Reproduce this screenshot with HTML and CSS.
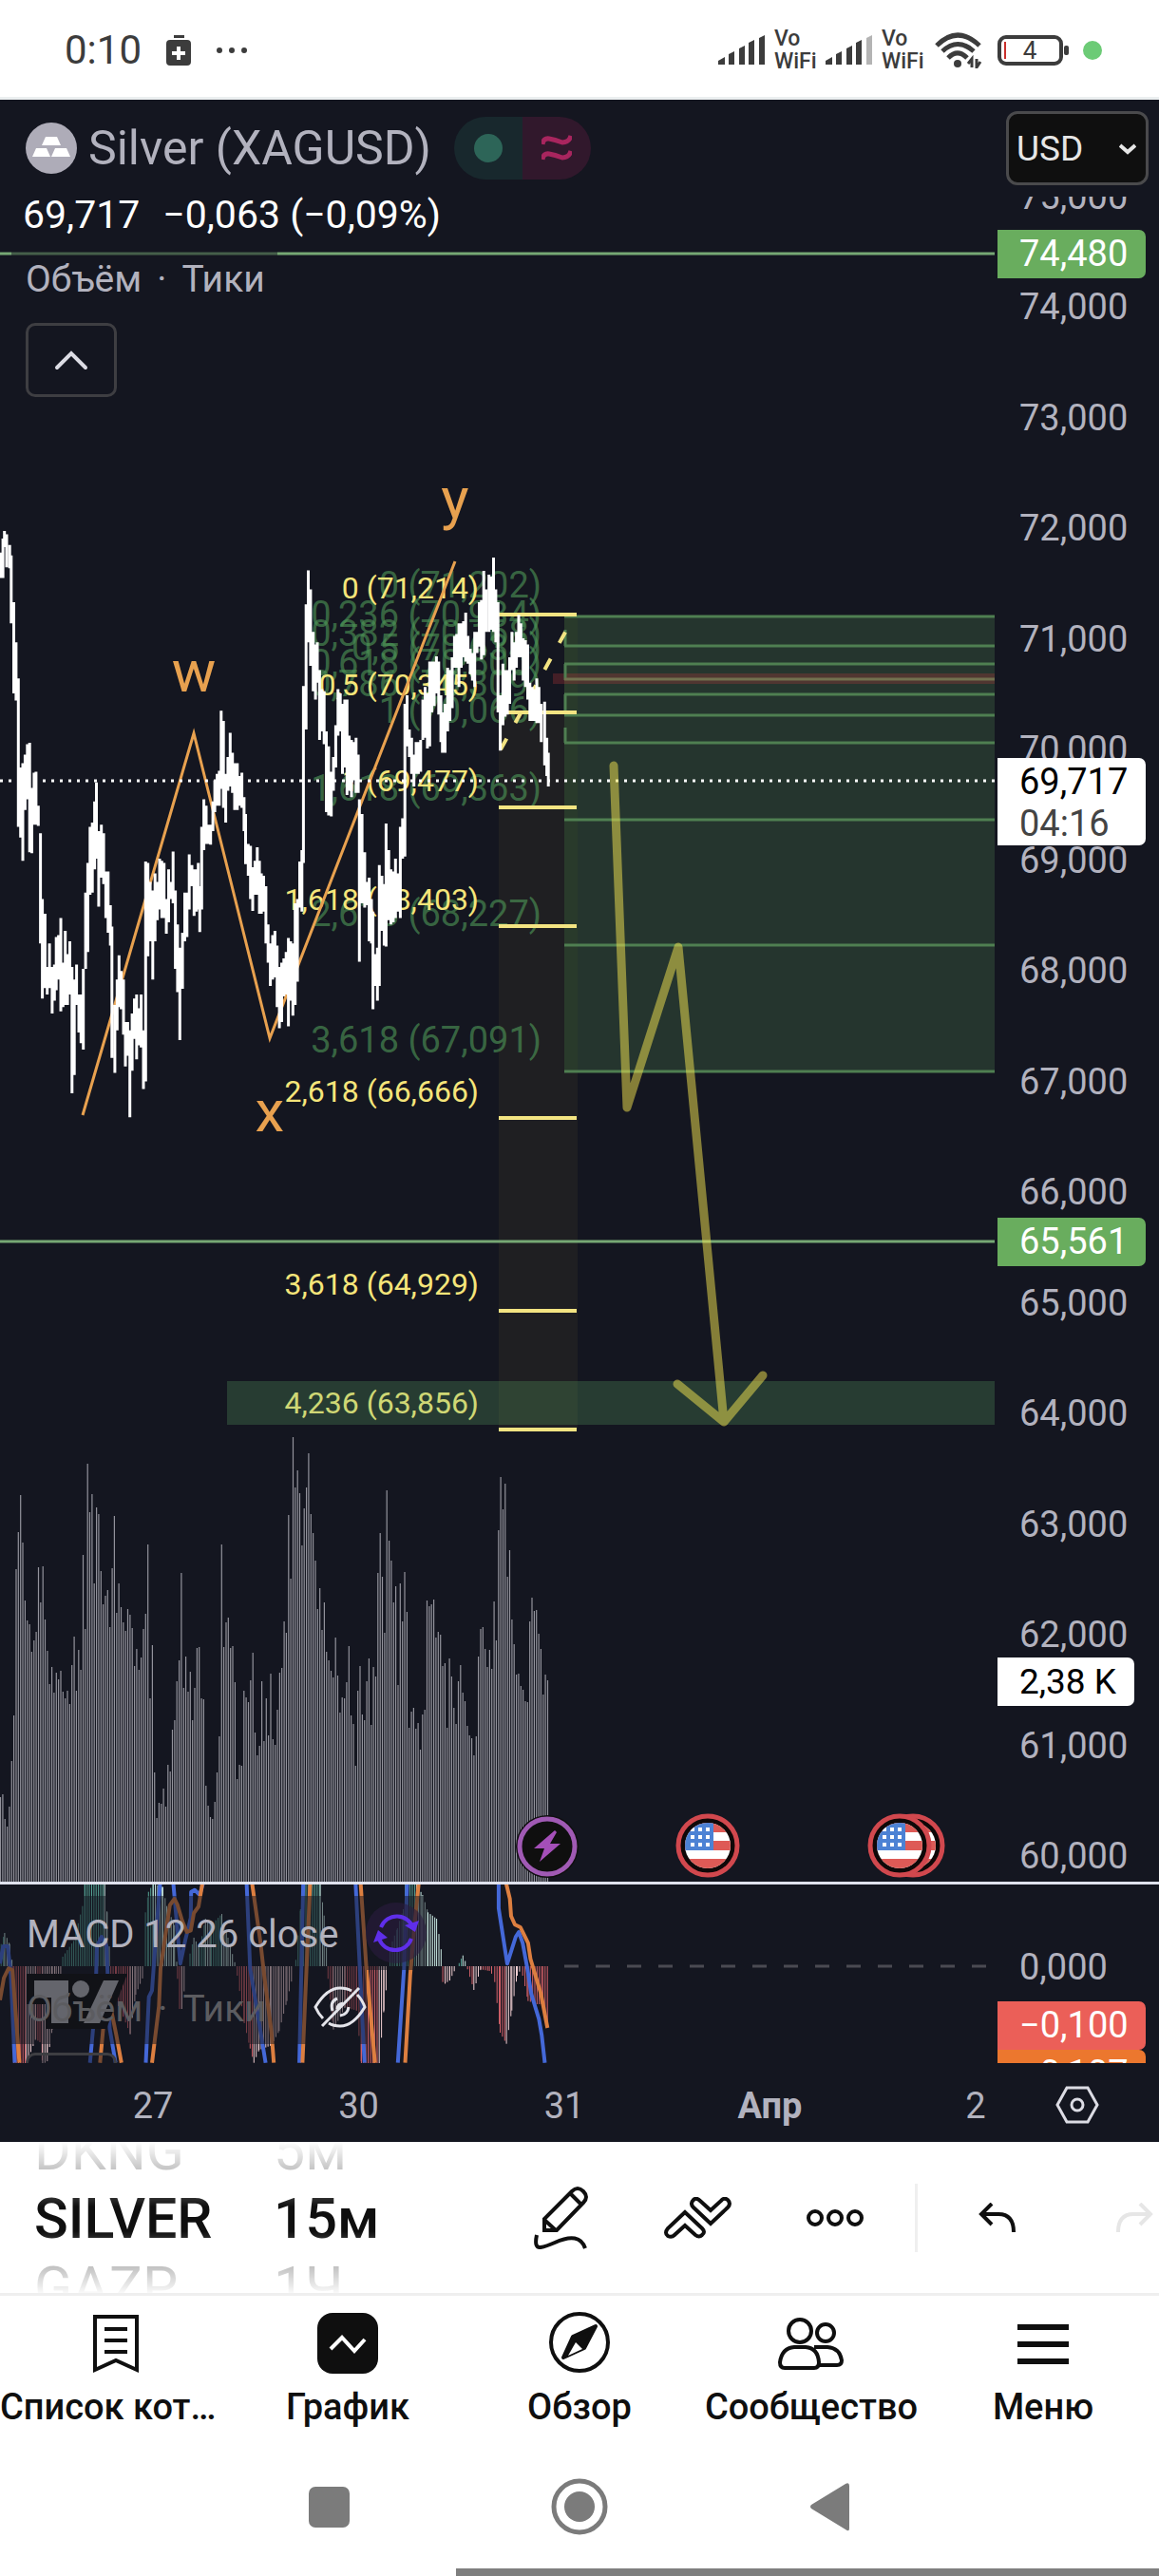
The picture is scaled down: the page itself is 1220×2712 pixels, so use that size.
FILE: index.html
```html
<!DOCTYPE html>
<html lang="ru">

<head>
    <meta charset="UTF-8">
    <meta name="viewport" content="width=device-width, initial-scale=1.0">
    <title>Silver (XAGUSD)</title>
    <link rel="stylesheet" href="styles.css">
</head>

<body>

    <!-- =========== Status bar =========== -->
    <header class="statusbar">
        <span class="clock">0:10</span>
        <svg class="saver" width="26" height="32" viewBox="0 0 26 32">
            <path d="M8 0h11v3H8zM4 5h18q4 0 4 4v19q0 4-4 4H4q-4 0-4-4V9q0-4 4-4zM11 12v5H6v4h5v5h4v-5h5v-4h-5v-5z" fill="#3c3c3c" fill-rule="evenodd"/>
        </svg>
        <svg width="34" height="8" viewBox="0 0 34 8" fill="#3c3c3c">
            <circle cx="4" cy="4" r="3"/><circle cx="17" cy="4" r="3"/><circle cx="30" cy="4" r="3"/>
        </svg>
        <div class="status-right">
            <svg width="49" height="32" viewBox="0 0 49 32" fill="#3c3c3c">
                <path d="M0 31v-4l7-4v8zM11 31V20l6-3v14zM22 31V14l6-3v20zM32 31V8l6-3v26zM43 31V3l6-3v31z"/>
            </svg>
            <span class="vowifi">Vo<br>WiFi</span>
            <svg width="49" height="32" viewBox="0 0 49 32" fill="#3c3c3c">
                <path d="M0 31v-4l7-4v8zM11 31V20l6-3v14zM22 31V14l6-3v20zM32 31V8l6-3v26z"/>
                <path d="M43 31V3l6-3v31z" fill="#b4b4b4"/>
            </svg>
            <span class="vowifi">Vo<br>WiFi</span>
            <svg class="wifi" width="50" height="38" viewBox="0 0 50 38" fill="none" stroke="#3c3c3c" stroke-width="5">
                <path d="M2 14Q24-8 47 14M8 20Q24 5 41 20M14 27Q24 17 34 27"/>
                <circle cx="24" cy="33" r="4" fill="#3c3c3c" stroke="none"/>
                <path d="M39 37V28l-4 5M44 28v9l4-6" stroke-width="3"/>
            </svg>
            <svg class="battery" width="76" height="32" viewBox="0 0 76 32">
                <rect x="2" y="2" width="65" height="28" rx="7" fill="none" stroke="#3c3c3c" stroke-width="4"/>
                <rect x="70" y="11" width="5" height="10" rx="2" fill="#3c3c3c"/>
                <path d="M8 7v18" stroke="#c9302c" stroke-width="2"/>
                <text x="34" y="25">4</text>
            </svg>
            <i class="privacy"></i>
        </div>
    </header>

    <!-- =========== Chart =========== -->
    <main class="chart">
        <section class="pane">
            <svg class="plot" viewBox="0 105 1047 1876">
                <!-- fib bands -->
                <rect x="525" y="750" width="83" height="755" fill="#1f1f22"/>
                <rect x="594" y="649" width="453" height="479" fill="#25352e"/>
                <rect x="594" y="649" width="14" height="479" fill="#293a2b"/>
                <rect x="582" y="709" width="465" height="11" fill="#c23a3a" opacity=".28"/>
                <path class="fib-green" d="M594 649h453M594 680h453M594 699h453M594 731h453M594 753h453M594 782h453M594 863h453M594 995h453M594 1128h453M595 663v17M595 699v17M595 731v18M595 766v16"/>
                <path d="M594 715h453" stroke="#71714f" stroke-width="3"/>
                <g class="fib-green-label">
                    <text x="570" y="629">0 (71,202)</text>
                    <text x="570" y="660">0,236 (70,934)</text>
                    <text x="570" y="680">0,382 (70,768)</text>
                    <text x="570" y="695">0,5 (70,634)</text>
                    <text x="570" y="711">0,618 (70,500)</text>
                    <text x="570" y="733">0,786 (70,309)</text>
                    <text x="570" y="761">1 (70,066)</text>
                    <text x="570" y="843">1,618 (69,363)</text>
                    <text x="570" y="975">2,618 (68,227)</text>
                    <text x="570" y="1108">3,618 (67,091)</text>
                </g>
                <path class="fib-yellow" d="M525 647h82M525 750h82M525 850h82M525 975h82M525 1177h82M525 1380h82M525 1505h82"/>
                <path class="fib-yellow" d="M527 789L597 662" stroke-dasharray="13 19"/>
                <g class="fib-yellow-label">
                    <text x="504" y="630">0 (71,214)</text>
                    <text x="504" y="732">0,5 (70,345)</text>
                    <text x="504" y="833">1 (69,477)</text>
                    <text x="504" y="958">1,618 (68,403)</text>
                    <text x="504" y="1160">2,618 (66,666)</text>
                    <text x="504" y="1363">3,618 (64,929)</text>
                    <text x="504" y="1488">4,236 (63,856)</text>
                </g>

                <!-- levels and demand zone -->
                <path d="M0 267h1047M0 1307h1047" stroke="#76a874" stroke-width="3"/>
                <rect x="239" y="1454" width="808" height="46" fill="#5fae66" opacity=".25"/>

                <path id="volume" stroke="#93939c" stroke-width="1.2"/>
                <path class="wave" d="M87 1174L204 772L284 1093L479 591"/>
                <path id="candles" fill="#fff"/>
                <path d="M0 822h1047" stroke="#fff" stroke-width="3" stroke-dasharray="3 6"/>

                <g class="wave-label">
                    <text x="204" y="728">w</text>
                    <text x="284" y="1191">x</text>
                    <text x="479" y="546">y</text>
                </g>

                <path class="arrow" d="M646 806L660 1166L714 997L762 1497M713 1457L762 1497L803 1448"/>

                <!-- events on the time line -->
                <g transform="translate(576 1944)">
                    <circle r="33" fill="#0f0f0f"/>
                    <circle r="29" fill="#0f0f0f" stroke="#a05ab4" stroke-width="5"/>
                    <path d="M8-17L-14 2H-3L-8 16L14-3H3L10-15z" fill="#a44fb8"/>
                </g>
                <defs>
                    <clipPath id="round"><circle r="24"/></clipPath>
                    <g id="flag">
                        <circle r="31" fill="#0f0808" stroke="#d1484e" stroke-width="5"/>
                        <g clip-path="url(#round)">
                            <path d="M-24-24h48v48h-48z" fill="#fff"/>
                            <path d="M-24-24h48v10h-48zM-24-5h48v10h-48zM-24 14h48v10h-48z" fill="#de5a56"/>
                            <path d="M-24-24h30v29h-30z" fill="#4c82d4"/>
                            <path d="M-18-17h4M-10-17h4M-2-17h4M-18-9h4M-10-9h4M-2-9h4M-18-1h4M-10-1h4M-2-1h4" stroke="#fff" stroke-width="4"/>
                        </g>
                    </g>
                </defs>
                <use href="#flag" x="745" y="1943"/>
                <use href="#flag" x="961" y="1943"/>
                <use href="#flag" x="947" y="1943"/>
            </svg>

            <div class="legend">
                <div class="symbol">
                    <svg width="54" height="54" viewBox="0 0 54 54">
                        <circle cx="27" cy="27" r="27" fill="#aeacb8"/>
                        <path d="M21 15h12l4 9H17zM11 27h11l4 9H7zM31 27h12l4 9H27z" fill="#fff"/>
                    </svg>
                    <h1>Silver (XAGUSD)</h1>
                    <span class="pills">
                        <span class="open"><i></i></span>
                        <span class="approx">
                            <svg width="32" height="28" viewBox="0 0 32 28" fill="none" stroke="#a8255e" stroke-width="5">
                                <path d="M1 10Q2 3 8 4T22 8Q29 8 31 1M1 26Q2 19 8 20T22 24Q29 24 31 17"/>
                            </svg>
                        </span>
                    </span>
                </div>
                <p class="quote"><span>69,717</span><span>−0,063 (−0,09%)</span></p>
                <p class="study">Объём<b>·</b>Тики</p>
                <button class="collapse" aria-label="Свернуть">
                    <svg width="36" height="22" viewBox="0 0 36 22" fill="none" stroke="#dcdce4" stroke-width="4" stroke-linecap="round">
                        <path d="M3 19L18 4L33 19"/>
                    </svg>
                </button>
            </div>
        </section>

        <aside class="price-axis">
            <div class="currency">
                <select aria-label="Валюта">
                    <option>USD</option>
                </select>
                <svg width="18" height="12" viewBox="0 0 18 12" fill="none" stroke="#e6e6e6" stroke-width="4">
                    <path d="M1 2L9 9L17 2"/>
                </svg>
            </div>
            <div class="scale">
                <ul>
                    <li>75,000</li>
                    <li>74,000</li>
                    <li>73,000</li>
                    <li>72,000</li>
                    <li>71,000</li>
                    <li>70,000</li>
                    <li>69,000</li>
                    <li>68,000</li>
                    <li>67,000</li>
                    <li>66,000</li>
                    <li>65,000</li>
                    <li>64,000</li>
                    <li>63,000</li>
                    <li>62,000</li>
                    <li>61,000</li>
                    <li>60,000</li>
                </ul>
                <span class="tag green" style="top: 3.4%">74,480</span>
                <span class="tag last" style="top: 34.7%">69,717<small>04:16</small></span>
                <span class="tag green" style="top: 62%">65,561</span>
                <span class="tag volume" style="top: 88.1%">2,38 K</span>
            </div>
        </aside>

        <!-- =========== MACD =========== -->
        <section class="pane macd">
            <svg class="plot" viewBox="0 0 1047 188">
                <path id="histUp" stroke="#56a596"/>
                <path id="histUpWeak" stroke="#cdeee6"/>
                <path id="histDown" stroke="#d9636b"/>
                <path id="histDownWeak" stroke="#f2d0d3"/>
                <path d="M594 86h453" stroke="#4a4a52" stroke-width="3" stroke-dasharray="15 18"/>
                <path id="macdLine" stroke="#4468d8"/>
                <path id="signalLine" stroke="#dd7f40"/>
            </svg>
            <div class="legend">
                <svg class="logo" width="106" height="58" viewBox="0 0 106 58">
                    <path d="M4 0h102L84 58H20V32H0V0z" fill="#0f0f0f"/>
                    <path d="M8 7h36v45H26V25H8zM97 7H81L60 52h17zM57 7a9 9 0 1 1 0 18a9 9 0 1 1 0-18z" fill="#b4b4b8"/>
                </svg>
                <div class="row wide">
                    <span>MACD 12 26 close</span>
                    <svg width="64" height="64" viewBox="0 0 64 64">
                        <circle cx="32" cy="32" r="32" fill="#2a1d40" opacity=".6"/>
                        <path d="M16 26a18 18 0 0 1 34 1M48 38a18 18 0 0 1-34 0" fill="none" stroke="#5f2eea" stroke-width="4"/>
                        <path d="M41 24l11 7l4-12zM8 42l5-13l10 8z" fill="#5f2eea"/>
                    </svg>
                </div>
                <div class="row">
                    <span class="muted">Объём<b>·</b>Тики</span>
                    <svg width="56" height="44" viewBox="0 0 56 44" fill="none" stroke="#e4e4ea" stroke-width="3">
                        <path d="M10 34Q5 29 2 22Q14 2 28 2Q35 2 40 5M46 9Q51 14 54 22Q42 42 28 42Q21 42 16 39M20 26Q17 16 25 13M28 31Q36 30 37 22M9 42L48 2M25 24q0-5 6-6"/>
                    </svg>
                </div>
                <div class="cut"></div>
            </div>
        </section>

        <aside class="price-axis macd-axis">
            <span class="zero">0,000</span>
            <span class="red">−0,100</span>
            <span class="orange">−0,107</span>
        </aside>

        <!-- =========== Time axis =========== -->
        <ul class="time-axis">
            <li>27</li>
            <li>30</li>
            <li>31</li>
            <li class="month">Апр</li>
            <li>2</li>
        </ul>
        <button class="axis-settings" aria-label="Настройки шкалы">
            <svg width="46" height="40" viewBox="0 0 46 40" fill="none" stroke="#dcdce4" stroke-width="3">
                <path d="M12 2h22l10 18l-10 18H12L2 20z"/><circle cx="23" cy="20" r="6"/>
            </svg>
        </button>
    </main>

    <!-- =========== Toolbar =========== -->
    <div class="toolbar">
        <ul class="picker symbols">
            <li>DKNG</li>
            <li class="current">SILVER</li>
            <li>GAZP</li>
        </ul>
        <ul class="picker intervals">
            <li>5м</li>
            <li class="current">15м</li>
            <li>1Ч</li>
        </ul>
        <div class="tools">
            <button aria-label="Рисование">
                <svg width="58" height="68" viewBox="0 0 58 68" fill="none" stroke="#0f0f0f" stroke-width="4">
                    <path d="M11 47V35L40 6Q46 0 52 6Q58 12 52 18L24 47zM11 36L23 47M38 8L50 20M3 52Q0 66 7 65Q13 64 22 60Q48 48 54 66"/>
                </svg>
            </button>
            <button aria-label="Индикаторы">
                <svg width="72" height="44" viewBox="0 0 72 44" fill="none" stroke="#0f0f0f" stroke-width="4">
                    <path d="M22 16L4 33Q0 38 4 41Q8 43 11 40L22 30L33 40Q37 43 40 40Q44 37 40 33z"/>
                    <path d="M49 28L67 11Q71 7 67 3Q63 0 60 4L49 14L38 4Q34 0 31 3Q27 7 31 11z"/>
                </svg>
            </button>
            <button aria-label="Ещё">
                <svg width="62" height="20" viewBox="0 0 62 20" fill="none" stroke="#0f0f0f" stroke-width="4">
                    <circle cx="10" cy="10" r="7"/><circle cx="31" cy="10" r="7"/><circle cx="52" cy="10" r="7"/>
                </svg>
            </button>
            <i class="split"></i>
            <button aria-label="Отменить">
                <svg width="40" height="32" viewBox="0 0 40 32" fill="none" stroke="#0f0f0f" stroke-width="4">
                    <path d="M14 1L3 12L14 23M3 12H21Q37 12 37 31"/>
                </svg>
            </button>
            <button aria-label="Повторить">
                <svg width="40" height="32" viewBox="0 0 40 32" fill="none" stroke="#e6e6e6" stroke-width="4">
                    <path d="M26 1L37 12L26 23M37 12H19Q3 12 3 31"/>
                </svg>
            </button>
        </div>
    </div>

    <!-- =========== Tabs =========== -->
    <nav class="tabs">
        <a href="#watchlist">
            <svg width="66" height="66" viewBox="0 0 66 66" fill="none" stroke="#0f0f0f" stroke-width="4">
                <path d="M11 5H55V61L33 51L11 61V5z"/><path d="M21 18h24M21 30h24M21 42h24"/>
            </svg>
            <span>Список котировок</span>
        </a>
        <a href="#chart">
            <svg width="66" height="66" viewBox="0 0 66 66">
                <rect x="1" y="1" width="64" height="64" rx="16" fill="#0f0f0f"/>
                <path d="M15 39L27 27L40 41L51 29" fill="none" stroke="#fff" stroke-width="4"/>
            </svg>
            <span>График</span>
        </a>
        <a href="#ideas">
            <svg width="66" height="66" viewBox="0 0 66 66" fill="none" stroke="#0f0f0f" stroke-width="4">
                <circle cx="33" cy="32" r="30"/>
                <path d="M26 26L50 15L38 38L16 48z" fill="#0f0f0f" stroke-linejoin="round"/>
                <path d="M29 32L36 39L21 46z" fill="#fff" stroke="none"/>
            </svg>
            <span>Обзор</span>
        </a>
        <a href="#community">
            <svg width="70" height="66" viewBox="0 0 70 66" fill="none" stroke="#0f0f0f" stroke-width="4">
                <ellipse cx="23" cy="20" rx="12" ry="12"/><ellipse cx="50" cy="22" rx="9" ry="9"/>
                <path d="M17 37H29Q42 38 43 53Q43 59 38 59H7Q2 59 2 53Q4 38 17 37zM38 37H52Q65 38 67 51Q67 56 62 56H43"/>
            </svg>
            <span>Сообщество</span>
        </a>
        <a href="#menu">
            <svg width="66" height="66" viewBox="0 0 66 66" fill="none" stroke="#0f0f0f" stroke-width="6">
                <path d="M6 16h54M6 34h54M6 52h54"/>
            </svg>
            <span>Меню</span>
        </a>
    </nav>

    <!-- =========== System navigation =========== -->
    <div class="sysnav">
        <button aria-label="Недавние"><svg width="60" height="60" viewBox="0 0 60 60" fill="#7b7b7b"><rect x="9" y="9" width="43" height="43" rx="7"/></svg></button>
        <button aria-label="Домой"><svg width="60" height="60" viewBox="0 0 60 60"><circle cx="30" cy="30" r="27" fill="none" stroke="#7b7b7b" stroke-width="5"/><circle cx="30" cy="30" r="16" fill="#7b7b7b"/></svg></button>
        <button aria-label="Назад"><svg width="60" height="60" viewBox="0 0 60 60" fill="#7b7b7b"><path d="M10 28L46 6Q50 4 50 8V53Q50 57 46 54L10 32Q8 30 10 28z"/></svg></button>
    </div>
    <div class="grip"></div>

    <script src="chart.js"></script>
</body>

</html>
```

FILE: styles.css
```css
* {
    margin: 0;
    padding: 0;
    box-sizing: border-box;
}

:root {
    --bg: #141620;
    --text: #b2b2be;
    --ink: #0f0f0f;
    --green: #69ad5e;
}

body {
    font-family: Roboto, sans-serif;
    background: #fff;
    overflow-x: hidden;
}

ul {
    list-style: none;
}

button {
    border: none;
    background: none;
    font: inherit;
}

svg {
    display: block;
    flex: none;
}

/* status bar */
.statusbar {
    display: flex;
    align-items: center;
    height: 105px;
    padding: 3px 60px 0 68px;
    border-bottom: 3px solid #ebeff0;
    color: #3c3c3c;
}

.clock {
    font-size: 42px;
    line-height: 48px;
}

.saver {
    margin: 0 26px 0 26px;
}

.status-right {
    display: flex;
    align-items: center;
    gap: 10px;
    margin-left: auto;
}

.vowifi {
    width: 44px;
    font-size: 23px;
    line-height: 24px;
    font-weight: 500;
}

.wifi {
    margin-left: 2px;
}

.battery {
    margin-left: 6px;
}

.battery text {
    font-size: 26px;
    text-anchor: middle;
    fill: #3c3c3c;
}

.privacy {
    width: 20px;
    height: 20px;
    margin-left: 4px;
    border-radius: 50%;
    background: #6ccb76;
}

/* chart */
.chart {
    display: grid;
    grid-template-columns: 1fr 173px;
    background: var(--bg);
    color: var(--text);
    font-size: 38px;
}

.pane {
    position: relative;
    overflow: hidden;
}

.plot {
    width: 100%;
    height: auto;
}

.fib-green {
    stroke: #4f7f51;
    stroke-width: 3;
}

.fib-yellow {
    stroke: #f3e482;
    stroke-width: 4;
}

.fib-green-label {
    font-size: 38px;
    text-anchor: end;
    fill: #4c9456;
    fill-opacity: 0.65;
}

.fib-yellow-label {
    font-size: 32px;
    text-anchor: end;
    fill: #f5e57a;
}

.wave {
    fill: none;
    stroke: #e8a14f;
    stroke-width: 3;
}

.wave-label {
    font-size: 62px;
    text-anchor: middle;
    fill: #e8a14f;
}

.arrow {
    fill: none;
    stroke: #f5e650;
    stroke-opacity: 0.5;
    stroke-width: 9;
    stroke-linecap: round;
    stroke-linejoin: round;
}

.legend {
    position: absolute;
    top: 0;
    left: 0;
}

.symbol {
    display: flex;
    align-items: center;
    height: 102px;
    padding-left: 27px;
}

.symbol h1 {
    margin: 0 24px 0 12px;
    font-size: 50px;
    line-height: 56px;
    font-weight: 400;
}

.pills {
    display: flex;
    border-radius: 33px;
    overflow: hidden;
}

.pills span {
    display: flex;
    align-items: center;
    justify-content: center;
    width: 72px;
    height: 66px;
}

.open {
    background: #18282d;
}

.open i {
    width: 30px;
    height: 30px;
    border-radius: 50%;
    background: #2d6558;
}

.approx {
    background: #31182c;
}

.quote {
    display: flex;
    gap: 24px;
    padding-left: 24px;
    font-size: 41px;
    line-height: 38px;
    color: #fff;
}

.study {
    width: 280px;
    margin: 14px 0 0 12px;
    padding-left: 15px;
    font-size: 39px;
    line-height: 70px;
    background: rgba(20, 22, 32, 0.5);
}

.study b,
.row b {
    margin: 0 16px;
    font-weight: 400;
}

.collapse {
    display: flex;
    align-items: center;
    justify-content: center;
    width: 96px;
    height: 78px;
    margin: 11px 0 0 27px;
    border: 3px solid #3e3e42;
    border-radius: 10px;
}

/* price axis */
.price-axis {
    display: flex;
    flex-direction: column;
    line-height: 51px;
}

.currency {
    position: relative;
    display: flex;
    height: 102px;
    padding: 12px 11px 12px 12px;
}

.currency select {
    width: 100%;
    padding-left: 8px;
    border: 3px solid #4a4a4c;
    border-radius: 12px;
    appearance: none;
    background: #0f0f0f;
    color: #e6e6e6;
    font: 37px Roboto, sans-serif;
}

.currency svg {
    position: absolute;
    right: 24px;
    top: 46px;
}

.scale {
    position: relative;
    display: flex;
    flex: 1;
    overflow: hidden;
}

.scale ul {
    display: flex;
    flex-direction: column;
    justify-content: space-between;
    margin-bottom: 26px;
    padding-left: 26px;
}

.scale li {
    display: flex;
    align-items: center;
    height: 0;
}

.tag {
    position: absolute;
    left: 3px;
    width: 156px;
    margin-top: -25px;
    padding-left: 23px;
    border-radius: 0 7px 7px 0;
}

.tag.green {
    background: var(--green);
    color: #fff;
}

.tag.last,
.tag.volume {
    background: #fff;
    color: #000;
}

.tag.last small {
    display: block;
    height: 41px;
    font-size: 38px;
    line-height: 36px;
    color: #444;
}

.tag.volume {
    width: 144px;
    font-size: 37px;
}

/* MACD */
.macd,
.macd-axis {
    border-top: 3px solid #e0e2ee;
}

.macd .plot path {
    fill: none;
}

#macdLine,
#signalLine {
    stroke-width: 4;
    stroke-linejoin: round;
}

.macd .legend {
    top: 12px;
}

.row {
    display: flex;
    align-items: center;
    position: relative;
    width: 386px;
    height: 78px;
    padding-left: 28px;
    background: rgba(20, 22, 32, 0.5);
}

.row.wide {
    width: 450px;
    font-size: 40px;
}

.row span {
    padding-top: 3px;
}

.row svg {
    margin-left: auto;
}

.row.wide svg {
    margin-right: 1px;
}

.muted {
    font-size: 39px;
    color: #5c5c60;
}

.logo {
    position: absolute;
    top: 82px;
    left: 28px;
}

.cut {
    width: 96px;
    height: 30px;
    margin: 9px 0 0 27px;
    border: 3px solid #3e3e42;
    border-bottom: none;
    border-radius: 10px 10px 0 0;
    background: rgba(20, 22, 32, 0.5);
}

.macd-axis {
    height: 191px;
    padding-left: 3px;
    overflow: hidden;
}

.macd-axis span {
    flex: none;
    width: 156px;
    padding-left: 23px;
    color: #fff;
}

.macd-axis .zero {
    margin: 62px 0 10px;
    color: var(--text);
}

.macd-axis .red {
    border-radius: 0 7px 7px 0;
    background: #eb5f58;
}

.macd-axis .orange {
    border-radius: 0 7px 0 0;
    background: #ec772e;
}

.time-axis {
    display: flex;
    justify-content: space-between;
    padding: 7px 20px 0 161px;
    line-height: 76px;
}

.time-axis li {
    display: flex;
    justify-content: center;
    width: 0;
}

.month {
    font-weight: 700;
}

.axis-settings {
    display: flex;
    align-items: center;
    justify-content: center;
    padding-top: 5px;
}

/* toolbar */
.toolbar {
    display: flex;
    height: 162px;
    overflow: hidden;
    border-bottom: 3px solid #efefef;
    color: var(--ink);
}

.picker {
    display: flex;
    flex-direction: column;
    justify-content: center;
    height: 162px;
    overflow: hidden;
    font-size: 59px;
    line-height: 72px;
    color: #777;
    mask-image: linear-gradient(transparent, #000 42%, #000 58%, transparent);
}

.symbols {
    width: 288px;
    padding-left: 36px;
}

.intervals {
    flex: 1;
}

.picker .current {
    font-weight: 500;
    color: var(--ink);
}

.tools {
    display: flex;
    flex: none;
    align-items: center;
    margin-right: -46px;
}

.tools button {
    display: flex;
    align-items: center;
    justify-content: center;
    width: 144px;
    height: 144px;
}

.split {
    width: 3px;
    height: 72px;
    margin: 0 12px;
    background: #efefef;
}

/* tabs */
.tabs {
    display: grid;
    grid-template-columns: repeat(5, 1fr);
    height: 156px;
    padding-top: 17px;
}

.tabs a {
    display: flex;
    flex-direction: column;
    align-items: center;
    min-width: 0;
    color: var(--ink);
    text-decoration: none;
}

.tabs span {
    width: 100%;
    margin-top: 9px;
    overflow: hidden;
    font-size: 38px;
    line-height: 50px;
    font-weight: 500;
    text-align: center;
    text-overflow: ellipsis;
    white-space: nowrap;
}

/* system navigation */
.sysnav {
    display: grid;
    grid-template-columns: repeat(3, 1fr);
    width: 65%;
    height: 131px;
    margin: 0 auto;
}

.sysnav button {
    display: flex;
    align-items: center;
    justify-content: center;
}

.grip {
    height: 8px;
    margin-left: 480px;
    background: #7f7f7f;
}
```

FILE: chart.js
```js
const PITCH_X = 620 / 1568;

// tick volume, distance from the top of the scale
const volume = [
    1175, 1167, 1245, 1270, 1206, 1062, 918, 457, 339, 222, 373, 555, 618, 630, 717, 681, 654, 450, 561, 447,
    615, 714, 820, 765, 846, 783, 804, 777, 843, 864, 840, 882, 759, 669, 840, 711, 774, 411, 645, 123,
    276, 219, 501, 261, 282, 462, 567, 540, 522, 639, 453, 288, 594, 501, 576, 624, 651, 582, 600, 642,
    762, 708, 774, 735, 645, 597, 378, 864, 696, 1098, 1242, 1194, 1197, 1149, 1206, 1074, 1095, 963, 933, 810,
    744, 468, 831, 732, 843, 780, 933, 831, 705, 702, 864, 867, 1140, 1203, 1239, 1245, 1191, 1098, 984, 378,
    702, 624, 609, 705, 699, 813, 1119, 1074, 1077, 840, 861, 876, 807, 720, 972, 1044, 1014, 810, 999, 864,
    981, 786, 993, 1011, 900, 783, 768, 621, 657, 285, 486, 39, 198, 144, 216, 381, 264, 198, 90, 282,
    342, 429, 582, 516, 648, 561, 717, 744, 777, 798, 672, 792, 909, 861, 864, 813, 699, 918, 945, 1077,
    840, 762, 915, 933, 810, 738, 948, 765, 795, 468, 342, 480, 657, 207, 366, 429, 561, 510, 822, 501,
    621, 465, 591, 957, 906, 894, 960, 942, 1026, 915, 900, 555, 573, 567, 552, 672, 654, 663, 762, 753,
    957, 738, 795, 894, 945, 810, 759, 846, 873, 951, 981, 990, 1044, 984, 732, 645, 639, 708, 765, 711,
    771, 558, 681, 333, 165, 267, 186, 480, 396, 615, 693, 789, 786, 825, 837, 873, 876, 621, 546, 588,
    585, 660, 708, 852, 789, 807
];

const step = 576 / (volume.length - 1);
document.getElementById("volume").setAttribute("d", volume.map((v, i) =>
    `M${(i * step + 0.5).toFixed(1)} 1981V${1500 + Math.round(v / 3)}`).join(""));

// bars: x, high, low
const bars = [
    0,183,243, 4,150,243, 8,132,170, 14,140,218, 22,165,220, 26,190,350, 33,300,515, 39,395,532, 45,480,830,
    51,690,855, 57,680,910, 63,660,790, 69,635,765, 75,632,890, 81,738,892, 87,702,825, 92,700,825, 98,780,828,
    104,845,1105, 109,1000,1235, 116,1035,1210, 122,1160,1225, 128,1105,1210, 135,1160,1270, 141,1155,1240,
    146,1090,1215, 152,1085,1190, 158,1045,1265, 164,1150,1255, 170,1075,1250, 176,1130,1250, 182,1100,1225,
    188,1160,1458, 194,1190,1415, 200,1155,1250, 206,1225,1315, 212,1225,1340, 218,1165,1355, 224,985,1165,
    230,915,1125, 236,830,990, 242,820,985, 248,770,930, 253,725,905, 259,840,1018, 266,825,950, 272,845,965,
    278,935,1045, 284,935,1080, 290,1015,1110, 294,1065,1375, 302,1250,1410, 308,1190,1310, 313,1133,1255,
    319,1170,1260, 325,1190,1320, 330,1290,1395, 336,1290,1370, 342,1310,1515, 348,1270,1405, 354,1235,1330,
    360,1225,1378, 366,1258,1345, 372,1225,1350, 378,1310,1448, 384,912,1430, 390,915,1135, 396,960,1100,
    403,980,1190, 409,940,1100, 415,960,1050, 421,905,1025, 427,910,1045, 433,915,1045, 439,1000,1082,
    445,930,1055, 451,960,1000, 457,888,1010, 463,980,1165, 469,1060,1220, 475,1115,1333, 482,1080,1212,
    488,985,1100, 494,985,1090, 500,895,1025, 507,920,970, 513,930,1040, 519,930,1030, 524,915,1025,
    528,970,1078, 533,830,1025, 539,765,885, 545,780,870, 551,825,870, 557,825,872, 563,770,840, 568,720,795,
    574,705,780, 580,698,780, 585,556,740, 591,580,785, 597,705,820, 603,665,745, 609,608,735, 615,655,750,
    621,680,790, 628,680,790, 634,710,780, 640,702,785, 646,760,840, 650,800,918, 657,870,945, 663,875,1000,
    669,925,1028, 675,910,990, 681,878,990, 687,910,1035, 692,940,1035, 698,945,1030, 704,970,1105,
    710,1060,1150, 716,1105,1205, 722,1085,1190, 728,1075,1185, 734,1110,1255, 740,1160,1305, 746,1150,1290,
    752,1140,1230, 758,1125,1225, 764,1092,1300, 770,1100,1240, 776,1105,1275, 782,1010,1250, 788,1000,1195,
    794,912,1020, 800,885,1030, 804,498,915, 811,305,600, 817,225,395, 823,270,450, 830,370,510, 836,400,530,
    841,395,490, 847,460,625, 853,505,605, 859,510,635, 865,605,795, 871,640,803, 878,700,805, 884,665,745,
    890,590,690, 896,505,615, 902,515,605, 908,540,705, 914,530,690, 920,530,755, 926,615,745, 932,625,760,
    938,630,720, 944,620,750, 950,660,750, 953,765,1148, 960,800,1010, 967,890,1020, 973,960,1015,
    979,950,1100, 985,1000,1105, 989,1030,1260, 996,1130,1205, 1001,1115,1240, 1006,920,1205, 1013,945,1075,
    1019,965,1110, 1024,822,1112, 1031,885,1050, 1037,930,1060, 1043,935,1055, 1049,905,1045, 1055,940,1030,
    1062,830,1045, 1068,810,905, 1074,540,900, 1080,520,640, 1086,600,665, 1092,620,705, 1098,660,735,
    1104,630,705, 1110,630,705, 1116,625,700, 1122,530,625, 1128,500,620, 1134,515,645, 1140,440,640,
    1146,440,560, 1152,440,545, 1158,428,515, 1164,440,565, 1170,520,630, 1174,560,655, 1181,540,655,
    1188,455,605, 1194,460,580, 1200,430,550, 1206,380,455, 1212,375,455, 1218,350,500, 1224,350,455,
    1230,345,430, 1236,325,440, 1242,380,445, 1248,410,470, 1254,420,485, 1260,370,500, 1266,370,420,
    1272,300,405, 1278,295,435, 1284,226,425, 1290,270,370, 1298,235,370, 1304,240,365, 1310,195,370,
    1316,270,395, 1322,300,560, 1328,520,650, 1335,445,590, 1341,460,570, 1347,460,565, 1353,430,540,
    1359,370,460, 1365,395,485, 1371,370,455, 1377,330,430, 1383,350,430, 1389,385,485, 1395,390,500,
    1401,400,530, 1407,490,580, 1413,500,580, 1419,505,580, 1425,480,585, 1431,500,585, 1437,540,630,
    1446,535,685, 1452,620,710, 1456,655,735
];

let candles = "";
for (let i = 0; i < bars.length; i += 3) {
    const x = bars[i] * PITCH_X;
    const top = 500 + bars[i + 1] / 2.24;
    const bottom = 500 + bars[i + 2] / 2.24;
    candles += `M${x.toFixed(1)} ${top.toFixed(1)}h3V${bottom.toFixed(1)}h-3z`;
}
document.getElementById("candles").setAttribute("d", candles);

// MACD histogram, runs of x, value around the zero line
const hist = [
    [3,-70, 12,-105, 25,-70, 32,-10],
    [32,60, 36,310, 68,310, 92,230, 103,240, 110,310, 122,300, 135,200, 145,80, 160,10],
    [162,-30, 190,-80, 213,-190, 219,-260, 270,-260, 276,-170, 283,-40],
    [286,40, 300,110, 318,160, 336,215, 350,90, 372,25],
    [375,-170, 383,-235, 395,-260, 420,-250, 430,-190, 450,-130, 456,-10],
    [458,40, 463,135, 469,135, 480,30],
    [490,-40, 500,-90, 515,-60, 530,-150, 545,-130, 572,-165, 588,-90, 606,-10],
    [612,30, 630,180, 645,260, 655,305, 668,265, 700,250, 720,205, 740,110, 757,20],
    [763,-20, 775,-180, 783,-260, 826,-260, 836,-160, 844,-20],
    [846,40, 860,200, 890,130, 920,140, 932,306, 978,306, 990,140, 1000,30],
    [1006,-60, 1025,-120, 1040,-180, 1046,-260, 1074,-260, 1090,-225, 1104,-170, 1126,-150, 1138,-50],
    [1142,50, 1148,55, 1160,45, 1174,10],
    [1184,-10, 1194,-34, 1202,-10],
    [1206,10, 1222,75, 1240,10, 1262,15, 1272,30],
    [1276,50, 1290,210, 1306,245, 1320,140, 1334,30, 1343,10],
    [1348,30, 1362,110, 1385,120, 1400,120, 1413,190]
];

const paths = { histUp: "", histUpWeak: "", histDown: "", histDownWeak: "" };
for (const run of hist) {
    for (let i = 0; i < run.length - 2; i += 2) {
        const [x0, v0, x1, v1] = run.slice(i, i + 4);
        const weak = Math.abs(v1) < Math.abs(v0) ? "Weak" : "";
        for (let x = x0; x < x1; x += 5.8) {
            const v = v0 + (v1 - v0) * (x - x0) / (x1 - x0);
            const key = (v < 0 ? "histUp" : "histDown") + weak;
            paths[key] += `M${(x / 2.45).toFixed(1)} 86v${(v / 3).toFixed(1)}`;
        }
    }
}
for (const id in paths) {
    document.getElementById(id).setAttribute("d", paths[id]);
}

const macd = [
    [0,385, 8,330, 20,330, 28,420, 38,698],
    [232,698, 240,590, 248,420, 250,330, 262,300, 275,330, 283,590, 298,698],
    [376,698, 384,490, 392,470, 402,300, 413,130],
    [447,130, 465,385, 478,310, 492,240, 493,158, 502,152, 515,168, 524,130],
    [636,130, 645,400, 660,510, 685,698],
    [772,698, 782,130],
    [917,130, 940,698],
    [1026,698, 1042,400, 1050,130],
    [1286,130, 1286,210, 1308,385, 1330,300, 1338,285, 1348,320, 1360,400, 1370,480, 1390,560, 1397,610, 1405,698]
];
const signal = [
    [0,500, 10,430, 22,400, 32,405, 50,698],
    [258,698, 266,590, 275,500, 285,520, 300,610, 313,698],
    [392,698, 410,520, 414,400, 438,200, 450,180, 458,200, 470,250, 482,285, 492,280, 500,225, 512,205, 522,130],
    [650,130, 672,320, 682,430, 700,600, 706,698],
    [780,698, 800,130],
    [930,130, 945,400, 967,698],
    [1045,698, 1058,420, 1070,250, 1080,130],
    [1305,130, 1315,180, 1318,235, 1328,262, 1342,270, 1362,320, 1368,370, 1395,480, 1412,588]
];

function drawLine(id, runs) {
    let d = "";
    for (const run of runs) {
        for (let i = 0; i < run.length; i += 2) {
            d += (i ? "L" : "M") + (run[i] / 2.45).toFixed(1) + " " + (run[i + 1] / 3 - 45).toFixed(1);
        }
    }
    document.getElementById(id).setAttribute("d", d);
}
drawLine("macdLine", macd);
drawLine("signalLine", signal);
```
